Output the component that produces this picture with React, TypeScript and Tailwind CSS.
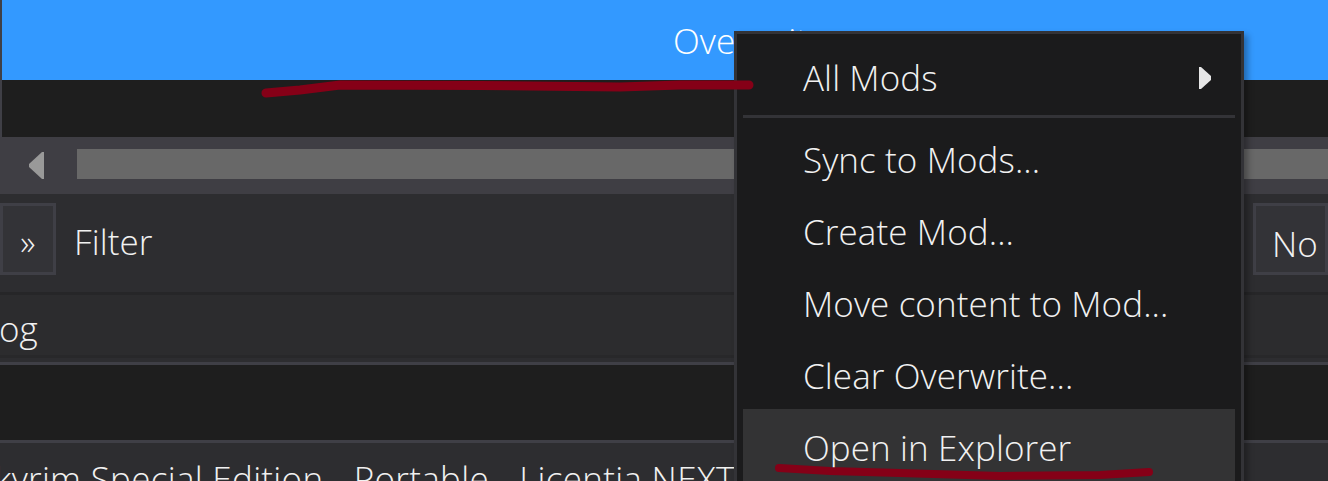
import React from "react";

const font = "font-['Open_Sans','Noto_Sans',sans-serif]";

const MenuItem = ({ label, active, arrow }: { label: string; active?: boolean; arrow?: boolean }) => (
  <div className={`flex h-[72px] items-center justify-between pl-[60px] pr-[24px] pt-[5px] ${active ? "bg-[#333334]" : ""}`}>
    <span>{label}</span>
    {arrow && (
      <svg width="12" height="22" viewBox="0 0 12 22">
        <path d="M0 0 L2 0 L12 9 L12 13 L2 22 L0 22 Z" fill="#e6e6e6" />
      </svg>
    )}
  </div>
);

const App = () => {
  return (
    <div className={`relative h-[481px] w-[1328px] overflow-hidden bg-[#2d2d30] text-[35px] font-light leading-none tracking-[0.1px] text-[#f1f1f1] ${font}`}>
      <div className="border-l-2 border-[#3f3f46]">
        <div className="flex h-[80px] items-center bg-[#3399ff] pl-[671px] text-white">Overwrite</div>
        <div className="h-[57px] bg-[#1e1e1e]" />
      </div>

      <div className="flex h-[57px] items-start bg-[#3f3e44] pl-[29px] pt-[12px]">
        <svg width="15" height="27" viewBox="0 0 15 27" className="mt-[3px] shrink-0">
          <path d="M15 0 L13 0 L0 12 L0 15 L13 27 L15 27 Z" fill="#999999" />
        </svg>
        <div className="ml-[33px] h-[30px] flex-1 bg-[#686868]" />
      </div>

      <div className="flex h-[101px] items-start justify-between border-b-[3px] border-[#262628] pt-[9px]">
        <div className="flex items-center">
          <div className="flex h-[72px] w-[56px] items-center justify-center border-[3px] border-[#3f3f46] bg-[#333337] pt-[5px]">»</div>
          <span className="ml-[18px] pt-[5px]">Filter</span>
        </div>
        <div className="flex h-[72px] w-[75px] items-center border-[3px] border-[#3f3f46] bg-[#333337] pl-[16px] pt-[8px]">No</div>
      </div>

      <div className="flex h-[63px] items-center border-b-[3px] border-[#28282a] bg-[#2c2c2e] pt-[7px]">
        <span className="-ml-[1px]">og</span>
      </div>

      <div className="mt-[4px] h-[81px] border-y-[3px] border-[#3f3f46] bg-[#1e1e1e]" />

      <div className="-ml-[25px] whitespace-nowrap pt-[18px] tracking-[0.3px]">Skyrim Special Edition - Portable - Licentia NEXT</div>

      <div className="absolute left-[734px] top-[31px] h-[460px] w-[510px] border-[3px] border-[#333337] bg-[#1b1b1c] px-[6px] pt-[5px] shadow-[4px_4px_6px_rgba(0,0,0,0.3)]">
        <MenuItem label="All Mods" arrow />
        <div className="mt-[4px] h-[3px] bg-[#333337]" />
        <div className="pt-[3px]">
          <MenuItem label="Sync to Mods..." />
          <MenuItem label="Create Mod..." />
          <MenuItem label="Move content to Mod..." />
          <MenuItem label="Clear Overwrite..." />
          <MenuItem label="Open in Explorer" active />
        </div>
      </div>

      {/* hand drawn marks on top of the screenshot */}
      <svg className="absolute left-0 top-0" width="1328" height="481" viewBox="0 0 1328 481" fill="none">
        <path d="M266 93 L300 90 L340 85 L480 85.5 L620 87 L680 85 L749 85" stroke="#850017" strokeWidth="9" strokeLinecap="round" />
        <path d="M779 468 L830 471 L900 473 L1000 476 L1100 475 L1149 472" stroke="#850017" strokeWidth="8" strokeLinecap="round" />
      </svg>
    </div>
  );
};

export default App;
